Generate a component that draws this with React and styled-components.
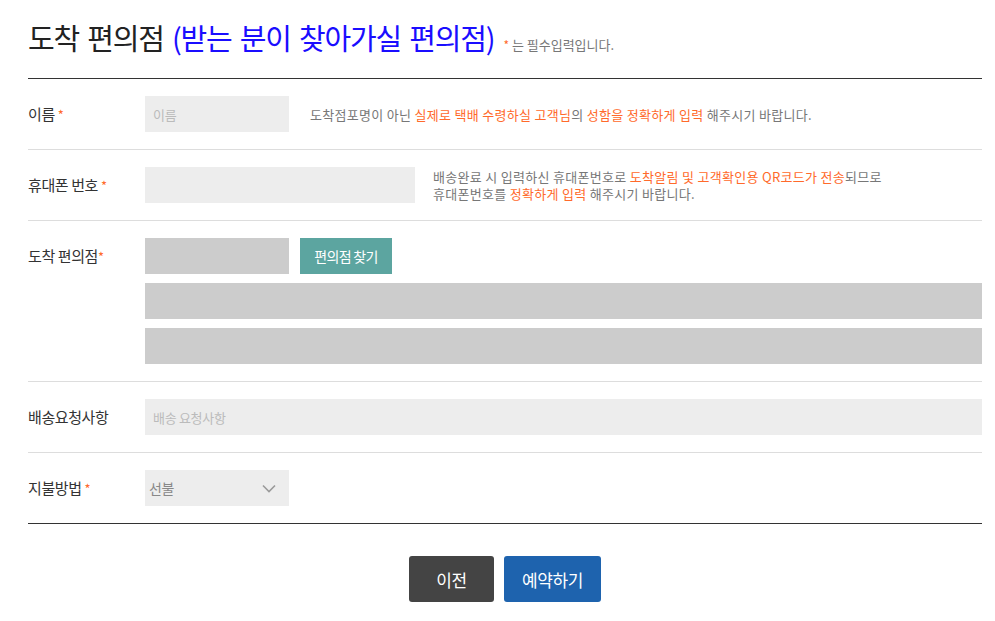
import React from "react";
import styled, { createGlobalStyle } from "styled-components";

const Global = createGlobalStyle`
  html, body { margin: 0; padding: 0; background: #fff; }
  body { font-family: "Noto Sans CJK KR", "Noto Sans", sans-serif; color: #333; }
  * { box-sizing: border-box; }
`;

const Page = styled.div`
  width: 995px;
  padding: 0 13px 0 28px;
`;

const TitleBar = styled.div`
  display: flex;
  align-items: baseline;
  height: 78px;
  padding-top: 17px;
`;

const Title = styled.h2`
  margin: 0;
  font-size: 29px;
  line-height: 40px;
  font-weight: 400;
  letter-spacing: -1.2px;
  word-spacing: 3px;
  color: #222;
  white-space: nowrap;
`;

const Blue = styled.span`
  color: #1a0dff;
`;

const Note = styled.span`
  margin-left: 9px;
  font-size: 13px;
  letter-spacing: 0;
  color: #777;
  white-space: nowrap;
`;

const Star = styled.span`
  color: #ff6a2b;
  font-size: ${(p) => (p.$small ? "12px" : "13px")};
`;

const Table = styled.div`
  border-top: 1px solid #333;
  border-bottom: 1px solid #333;
`;

const Row = styled.div`
  display: grid;
  grid-template-columns: 117px 1fr;
  align-items: start;
  padding: 17px 0;
  border-bottom: 1px solid #ddd;
  &:last-child { border-bottom: none; }
`;

const Label = styled.div`
  height: 36px;
  font-size: 15px;
  line-height: 36px;
  letter-spacing: -0.4px;
  color: #333;
  white-space: nowrap;
`;

const Field = styled.div`
  display: flex;
  flex-direction: ${(p) => (p.$stack ? "column" : "row")};
  align-items: ${(p) => (p.$stack ? "stretch" : "center")};
  gap: ${(p) => (p.$stack ? "9px" : "0")};
  min-width: 0;
`;

const Line = styled.div`
  display: flex;
  align-items: center;
  gap: 11px;
`;

const Input = styled.input`
  display: block;
  flex: none;
  width: ${(p) => p.$w || "100%"};
  height: 36px;
  margin: 0;
  border: none;
  outline: none;
  padding: 0 8px;
  background: ${(p) => (p.$dim ? "#cccccc" : "#ededed")};
  font-family: inherit;
  font-size: 13px;
  letter-spacing: -0.3px;
  color: #333;
  &::placeholder { color: #bbb; }
`;

const Help = styled.div`
  margin: 0 0 0 ${(p) => p.$ml || "21px"};
  font-size: 13px;
  line-height: 17px;
  letter-spacing: 0.3px;
  color: #777;
  white-space: nowrap;
`;

const HelpLine = styled.div`
  height: 17px;
`;

const Hl = styled.span`
  color: #ff6a2b;
`;

const TealButton = styled.button`
  flex: none;
  width: 92px;
  height: 36px;
  border: none;
  background: #5ca5a0;
  color: #fff;
  font-family: inherit;
  font-size: 14px;
  letter-spacing: -0.7px;
  cursor: pointer;
`;

const SelectBox = styled.div`
  width: 144px;
  height: 36px;
  background: #ededed;
  display: flex;
  align-items: center;
  justify-content: space-between;
  padding: 0 13px 0 4px;
  font-size: 14px;
  letter-spacing: -0.5px;
  color: #888;
`;

const Actions = styled.div`
  display: flex;
  justify-content: center;
  gap: 10px;
  padding-top: 32px;
`;

const ActionButton = styled.button`
  min-width: 85px;
  height: 46px;
  padding: 0 18px;
  border: none;
  border-radius: 3px;
  background: ${(p) => (p.$primary ? "#1e63ae" : "#444444")};
  color: #fff;
  font-family: inherit;
  font-size: 17px;
  letter-spacing: -0.4px;
  cursor: pointer;
`;

const Chevron = () => (
  <svg width="14" height="9" viewBox="0 0 14 9" fill="none">
    <polyline points="1,1.5 7,7.5 13,1.5" stroke="#9a9a9a" strokeWidth="1.6" />
  </svg>
);

export default function App() {
  return (
    <>
      <Global />
      <Page>
        <TitleBar>
          <Title>
            도착 편의점 <Blue>(받는 분이 찾아가실 편의점)</Blue>
          </Title>
          <Note>
            <Star $small>*</Star> 는 필수입력입니다.
          </Note>
        </TitleBar>
        <Table>
          <Row>
            <Label>
              이름 <Star>*</Star>
            </Label>
            <Field>
              <Input $w="144px" placeholder="이름" />
              <Help>
                도착점포명이 아닌 <Hl>실제로 택배 수령하실 고객님</Hl>의{" "}
                <Hl>성함을 정확하게 입력</Hl> 해주시기 바랍니다.
              </Help>
            </Field>
          </Row>
          <Row>
            <Label>
              휴대폰 번호 <Star>*</Star>
            </Label>
            <Field>
              <Input $w="270px" />
              <Help $ml="18px">
                <HelpLine>
                  배송완료 시 입력하신 휴대폰번호로 <Hl>도착알림 및 고객확인용 QR코드가 전송</Hl>되므로
                </HelpLine>
                <HelpLine>
                  휴대폰번호를 <Hl>정확하게 입력</Hl> 해주시기 바랍니다.
                </HelpLine>
              </Help>
            </Field>
          </Row>
          <Row>
            <Label>
              도착 편의점<Star>*</Star>
            </Label>
            <Field $stack>
              <Line>
                <Input $w="144px" $dim readOnly />
                <TealButton>편의점 찾기</TealButton>
              </Line>
              <Input $dim readOnly />
              <Input $dim readOnly />
            </Field>
          </Row>
          <Row>
            <Label>배송요청사항</Label>
            <Field>
              <Input placeholder="배송 요청사항" />
            </Field>
          </Row>
          <Row>
            <Label>
              지불방법 <Star>*</Star>
            </Label>
            <Field>
              <SelectBox>
                <span>선불</span>
                <Chevron />
              </SelectBox>
            </Field>
          </Row>
        </Table>
        <Actions>
          <ActionButton>이전</ActionButton>
          <ActionButton $primary>예약하기</ActionButton>
        </Actions>
      </Page>
    </>
  );
}
